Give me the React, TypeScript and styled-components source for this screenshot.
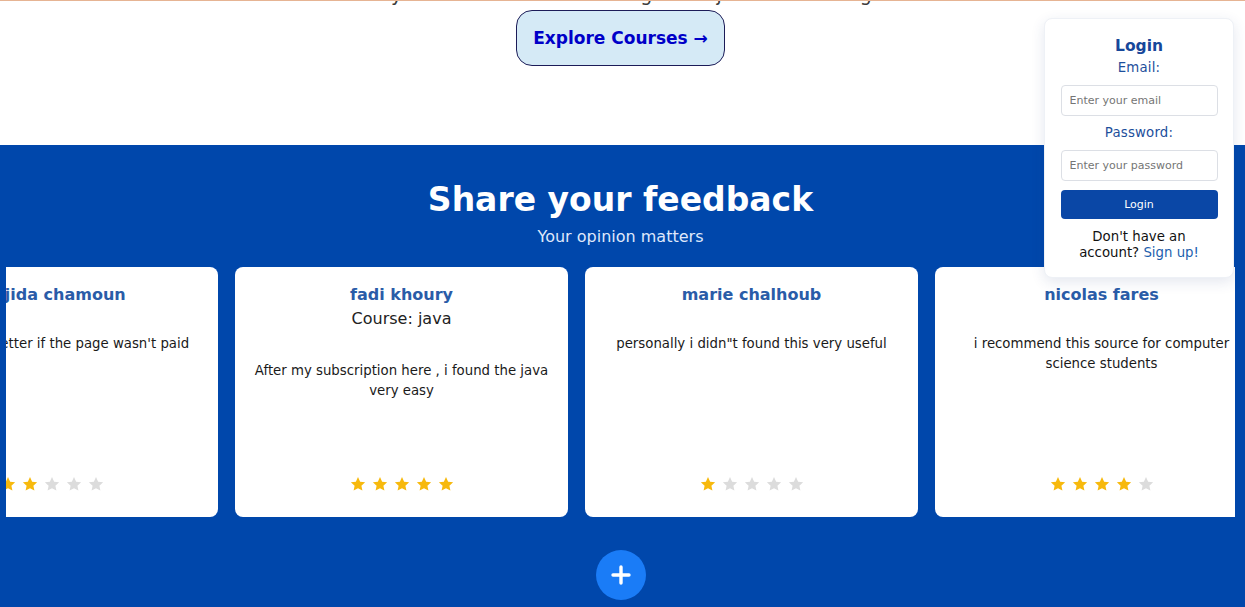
import React from "react";
import styled, { createGlobalStyle } from "styled-components";

const GlobalStyle = createGlobalStyle`
  html, body { margin: 0; padding: 0; background: #ffffff; overflow: hidden; }
  body { font-family: "DejaVu Sans", Verdana, sans-serif; }
  * { box-sizing: border-box; }
`;

const Page = styled.div`
  position: relative;
  width: 1245px;
  height: 607px;
  overflow: hidden;
`;

const TopLine = styled.div`
  height: 1px;
  background: #e6b493;
`;

const Hero = styled.section`
  height: 144px;
  padding-right: 4px;
  display: flex;
  flex-direction: column;
  align-items: center;
  overflow: hidden;
`;

const HeroText = styled.p`
  margin: -18px 0 0;
  font-size: 19px;
  line-height: 22px;
  color: #3a3a3a;
  white-space: nowrap;
`;

const ExploreButton = styled.button`
  margin-top: 5px;
  height: 56px;
  padding: 0 16px;
  border: 1px solid #1c1c58;
  border-radius: 16px;
  background: #d5eaf6;
  color: #0000c8;
  font-family: "DejaVu Sans", Verdana, sans-serif;
  font-weight: bold;
  font-size: 17px;
  cursor: pointer;
`;

const Feedback = styled.section`
  background: #0047ab;
  padding: 35px 4px 0 0;
  height: 462px;
  display: flex;
  flex-direction: column;
  align-items: center;
`;

const Title = styled.h2`
  margin: 0;
  font-size: 33px;
  line-height: 40px;
  font-weight: bold;
  color: #ffffff;
`;

const Subtitle = styled.p`
  margin: 7px 0 0;
  font-size: 16px;
  line-height: 20px;
  color: #dfe8fb;
`;

const Viewport = styled.div`
  align-self: stretch;
  margin: 20px 6px 0 6px;
  overflow: hidden;
`;

const Track = styled.div<{ $offset: number }>`
  display: flex;
  gap: 17px;
  transform: translateX(${(p) => p.$offset}px);
`;

const Card = styled.article`
  flex: 0 0 333px;
  height: 250px;
  background: #ffffff;
  border-radius: 8px;
  padding: 18px 15px 25px;
  display: flex;
  flex-direction: column;
  align-items: center;
  text-align: center;
`;

const Name = styled.h3`
  margin: 0;
  font-size: 16px;
  line-height: 20px;
  font-weight: bold;
  color: #2a5ca8;
  white-space: nowrap;
`;

const Course = styled.p`
  margin: 4px 0 0;
  font-size: 16px;
  line-height: 20px;
  color: #222222;
`;

const Comment = styled.p<{ $withCourse: boolean }>`
  margin: ${(p) => (p.$withCourse ? "32px" : "29px")} 0 0;
  font-size: 13.3px;
  line-height: 20px;
  color: #1a1a1a;
`;

const Stars = styled.div`
  margin-top: auto;
  display: flex;
  gap: 6px;
`;

const StarIcon = styled.svg<{ $on: boolean }>`
  width: 16px;
  height: 16px;
  fill: ${(p) => (p.$on ? "#f7b90d" : "#dcdcdc")};
`;

const Fab = styled.button`
  margin-top: 33px;
  width: 50px;
  height: 50px;
  border-radius: 50%;
  border: none;
  background: #1a7cf7;
  display: flex;
  align-items: center;
  justify-content: center;
  cursor: pointer;
  padding: 0;
`;

const LoginPanel = styled.aside`
  position: absolute;
  top: 18px;
  right: 11px;
  width: 190px;
  background: #ffffff;
  border-radius: 8px;
  box-shadow: 0 4px 14px rgba(30, 60, 120, 0.12);
  border: 1px solid #eef1f6;
  padding: 18px 16px 16px;
  display: flex;
  flex-direction: column;
  align-items: center;
  text-align: center;
`;

const LoginTitle = styled.h2`
  margin: 0;
  font-size: 15.5px;
  line-height: 18px;
  font-weight: bold;
  color: #17479a;
`;

const FieldLabel = styled.label`
  margin-top: 5px;
  font-size: 13.3px;
  line-height: 16px;
  color: #1d4f9c;
  letter-spacing: 0.2px;
`;

const Input = styled.input`
  margin-top: 9px;
  width: 157px;
  height: 31px;
  border: 1px solid #dcdfe5;
  border-radius: 4px;
  padding: 0 8px;
  font-family: "DejaVu Sans", Verdana, sans-serif;
  font-size: 11px;
  color: #333;
  &::placeholder { color: #757575; }
`;

const SpacedLabel = styled(FieldLabel)`
  margin-top: 9px;
`;

const LoginButton = styled.button`
  margin-top: 9px;
  width: 157px;
  height: 29px;
  border: none;
  border-radius: 4px;
  background: #0a47a6;
  color: #ffffff;
  font-family: "DejaVu Sans", Verdana, sans-serif;
  font-size: 11px;
`;

const SignupText = styled.p`
  margin: 10px 0 0;
  font-size: 13.3px;
  line-height: 16px;
  color: #111111;
`;

const SignupLink = styled.a`
  color: #1d5fae;
  text-decoration: none;
`;

type Review = { name: string; course?: string; comment: string; rating: number };

const reviews: Review[] = [
  { name: "majida chamoun", comment: "It would be better if the page wasn't paid", rating: 2 },
  { name: "fadi khoury", course: "java", comment: "After my subscription here , i found the java very easy", rating: 5 },
  { name: "marie chalhoub", comment: 'personally i didn"t found this very useful', rating: 1 },
  { name: "nicolas fares", comment: "i recommend this source for computer science students", rating: 4 },
];

const Star = ({ on }: { on: boolean }) => (
  <StarIcon $on={on} viewBox="0 0 24 24">
    <path d="M12 1.6l3.2 6.9 7.5.9-5.6 5.1 1.5 7.4L12 18.2l-6.6 3.7 1.5-7.4L1.3 9.4l7.5-.9z" />
  </StarIcon>
);

export default function App() {
  return (
    <>
      <GlobalStyle />
      <Page>
        <TopLine />
        <Hero>
          <HeroText>Don't miss any chance and start learning now - join us for a brighter future.</HeroText>
          <ExploreButton>Explore Courses →</ExploreButton>
        </Hero>
        <Feedback>
          <Title>Share your feedback</Title>
          <Subtitle>Your opinion matters</Subtitle>
          <Viewport>
            <Track $offset={-121}>
              {reviews.map((r) => (
                <Card key={r.name}>
                  <Name>{r.name}</Name>
                  {r.course && <Course>Course: {r.course}</Course>}
                  <Comment $withCourse={!!r.course}>{r.comment}</Comment>
                  <Stars>
                    {[1, 2, 3, 4, 5].map((i) => (
                      <Star key={i} on={i <= r.rating} />
                    ))}
                  </Stars>
                </Card>
              ))}
            </Track>
          </Viewport>
          <Fab aria-label="Add feedback">
            <svg width="20" height="20" viewBox="0 0 20 20">
              <path d="M10 2v16M2 10h16" stroke="#ffffff" strokeWidth="3.4" strokeLinecap="round" />
            </svg>
          </Fab>
        </Feedback>
        <LoginPanel>
          <LoginTitle>Login</LoginTitle>
          <FieldLabel>Email:</FieldLabel>
          <Input type="email" placeholder="Enter your email" />
          <SpacedLabel>Password:</SpacedLabel>
          <Input type="password" placeholder="Enter your password" />
          <LoginButton>Login</LoginButton>
          <SignupText>
            Don't have an account? <SignupLink href="#">Sign up!</SignupLink>
          </SignupText>
        </LoginPanel>
      </Page>
    </>
  );
}
